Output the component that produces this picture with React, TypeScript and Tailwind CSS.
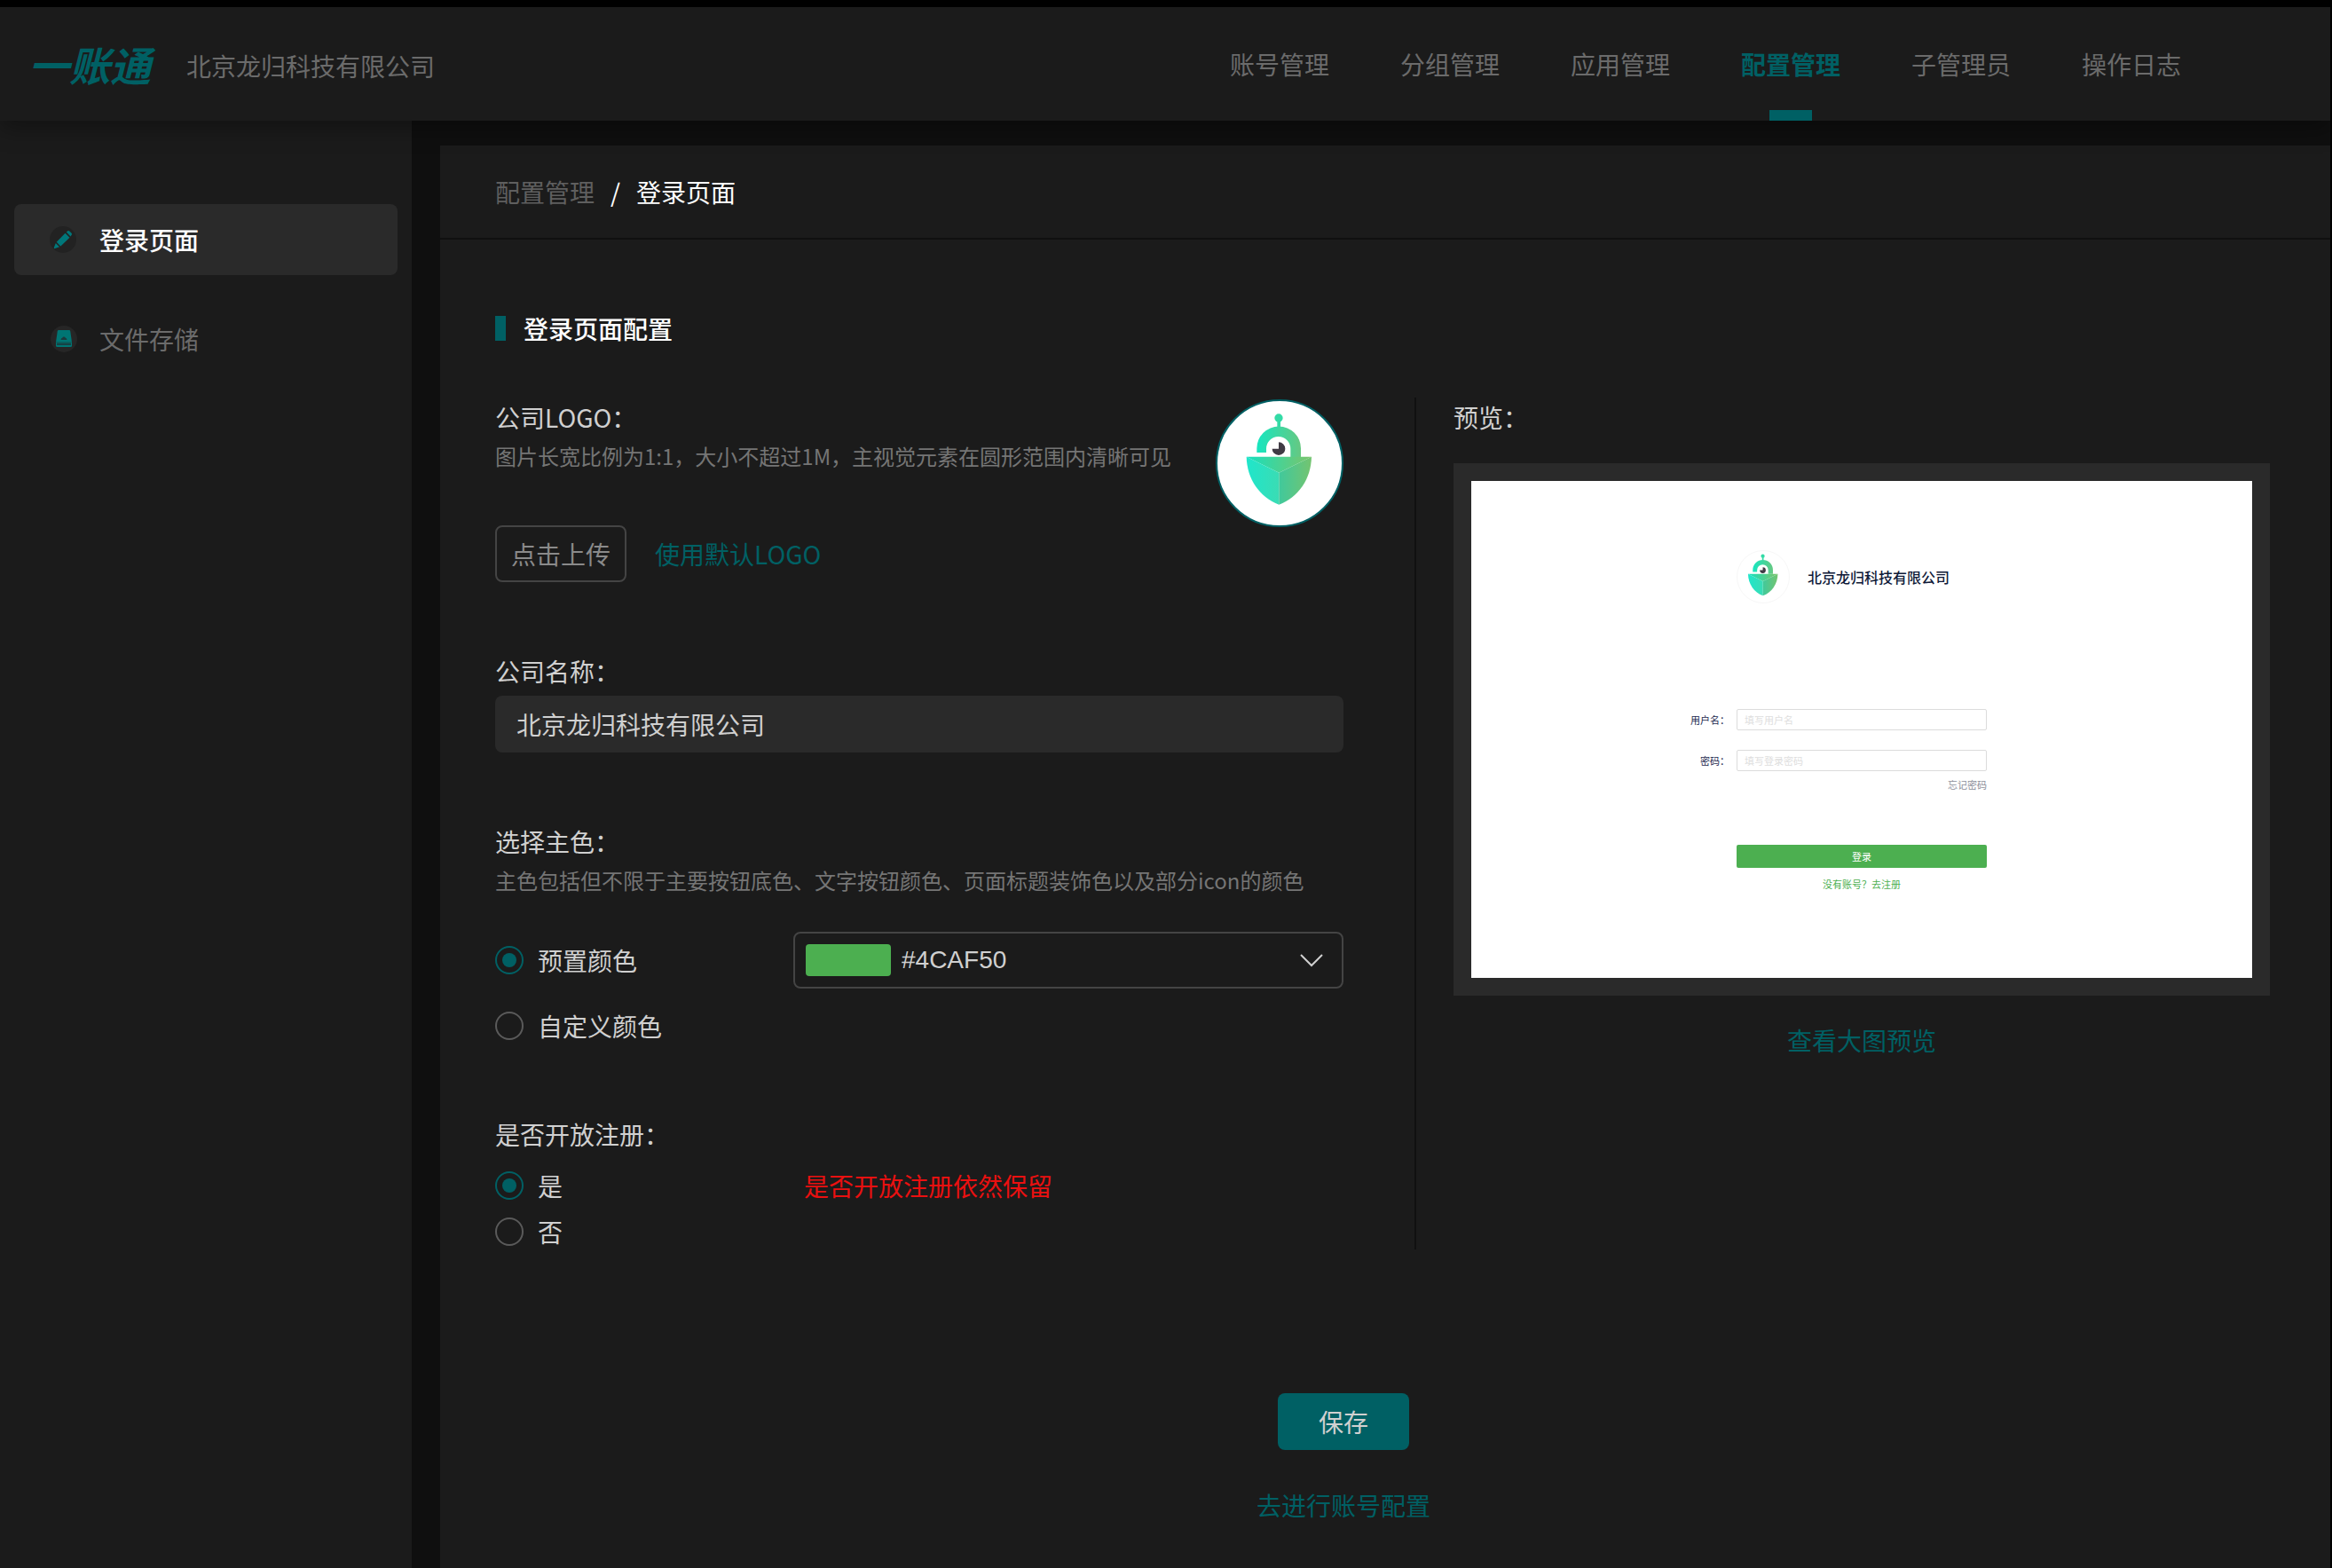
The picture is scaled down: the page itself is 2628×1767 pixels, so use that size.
import { useId, useState } from 'react'
import type { ReactNode } from 'react'
import clsx from 'clsx'

const NAV_ITEMS = ['账号管理', '分组管理', '应用管理', '配置管理', '子管理员', '操作日志']
const COMPANY = '北京龙归科技有限公司'
const PRESET_COLORS = ['#4CAF50', '#2196F3', '#FF9800', '#006064']

function RobotLogo({ className }: { className?: string }) {
  const id = useId()
  return (
    <svg viewBox="96 96 420 420" className={className} aria-hidden="true">
      <defs>
        <linearGradient id={`${id}arch`} x1="229" y1="0" x2="378" y2="0" gradientUnits="userSpaceOnUse">
          <stop offset="0" stopColor="#16e6c0" />
          <stop offset="1" stopColor="#66c882" />
        </linearGradient>
        <linearGradient id={`${id}top`} x1="194" y1="0" x2="414" y2="0" gradientUnits="userSpaceOnUse">
          <stop offset="0" stopColor="#16e0be" />
          <stop offset="1" stopColor="#7cc46a" />
        </linearGradient>
        <linearGradient id={`${id}left`} x1="194" y1="0" x2="304" y2="0" gradientUnits="userSpaceOnUse">
          <stop offset="0" stopColor="#1fe6cb" />
          <stop offset="1" stopColor="#3adcb4" />
        </linearGradient>
        <linearGradient id={`${id}right`} x1="304" y1="0" x2="414" y2="0" gradientUnits="userSpaceOnUse">
          <stop offset="0" stopColor="#40c99c" />
          <stop offset="1" stopColor="#74c470" />
        </linearGradient>
      </defs>
      <circle cx="303" cy="153" r="14" fill="#33dba6" />
      <path d="M298 160h11v26h-11z" fill="#33dba6" />
      <path
        d="M229 270v-14a74 74 0 0 1 149 0v29h-35v-28a41 41 0 0 0-82 0v13z"
        fill={`url(#${id}arch)`}
      />
      <path d="M303 235a22 22 0 1 1-22 22h22z" fill="#403a44" />
      <path d="M194 284h220l-110 54z" fill={`url(#${id}top)`} />
      <path d="M194 284l110 54v108c-66-26-108-86-110-162z" fill={`url(#${id}left)`} />
      <path d="M414 284l-110 54v108c66-26 108-86 110-162z" fill={`url(#${id}right)`} />
    </svg>
  )
}

function PencilIcon() {
  return (
    <svg viewBox="0 0 32 32" className="size-8" aria-hidden="true">
      <circle cx="15" cy="16" r="15" fill="#222222" />
      <g fill="#00777a">
        <path d="M17.500 8.800l5 5-10.200 9.600-4.600-4.600z" />
        <path d="M18.800 7.600l1.500-1.300q1-.8 2 .1l2.300 2.300q.9 1 .1 2l-1.200 1.700z" />
        <path d="M6.800 20l4.200 4.200-5.200 1.900q-1.200.2-1-1z" />
      </g>
    </svg>
  )
}

function StorageIcon() {
  return (
    <svg viewBox="0 0 32 32" className="size-8" aria-hidden="true">
      <circle cx="16" cy="16" r="15" fill="#262626" />
      <path d="M10 6h12q1 0 1.200 1L25 19.500H7L8.800 7Q9 6 10 6z" fill="#007573" />
      <path d="M12.500 17q0-2 2-2.500 0-1 1.500-1t1.500 1q2 .5 2 2.500z" fill="#1c3a3c" />
      <path d="M7 19.500h18v4q0 1.500-1.500 1.500h-15Q7 25 7 23.500z" fill="#007573" />
      <path d="M8 20.500h16v2.500H8z" fill="#164244" />
    </svg>
  )
}

interface RadioProps {
  name: string
  label: string
  checked: boolean
  onChange: () => void
}

function Radio({ name, label, checked, onChange }: RadioProps) {
  return (
    <label className="flex h-10 items-center gap-4">
      <input
        type="radio"
        name={name}
        checked={checked}
        onChange={onChange}
        className="grid size-8 appearance-none place-content-center rounded-full border-2 border-[#5a5a5a] checked:border-[#006064] checked:before:size-4 checked:before:rounded-full checked:before:bg-[#006064] checked:before:content-['']"
      />
      {label}
    </label>
  )
}

function Header() {
  return (
    <header className="relative z-10 flex h-32 items-center justify-between bg-[#1b1b1b] pr-[168px] pl-8 shadow-[0_8px_24px_rgba(0,0,0,0.35)]">
      <div className="flex items-center gap-10">
        <a href="#" className="text-[46px] leading-none font-bold whitespace-nowrap text-[#006064] italic">一账通</a>
        <span className="pt-1 text-[28px] leading-10 whitespace-nowrap text-[#6b6b6b]">{COMPANY}</span>
      </div>
      <nav className="flex h-full gap-20">
        {NAV_ITEMS.map((item) => {
          const active = item === '配置管理'
          return (
            <a
              key={item}
              href="#"
              className={clsx(
                'flex h-full flex-col items-center justify-between pt-11 text-[28px] leading-10 whitespace-nowrap',
                active ? 'font-bold text-[#006064]' : 'text-[#6b6b6b]',
              )}
            >
              {item}
              {active && <span className="h-3 w-12 bg-[#006064]" />}
            </a>
          )
        })}
      </nav>
    </header>
  )
}

function SideItem({ icon, label, active }: { icon: ReactNode; label: string; active?: boolean }) {
  return (
    <a
      href="#"
      className={clsx(
        'flex h-20 items-center gap-6 rounded-lg pl-10 text-[28px] leading-10',
        active ? 'bg-[#2a2a2a] font-medium text-white' : 'text-[#6b6b6b]',
      )}
    >
      {icon}
      {label}
    </a>
  )
}

function LoginPreview({ color }: { color: string }) {
  return (
    <div className="bg-[#2a2a2a] p-5">
      <form
        className="grid grid-cols-[1fr_282px_1fr] gap-x-2 bg-white pt-[78px] pb-[98px] text-[11px] leading-4 text-[#1c2950]"
        onSubmit={(e) => e.preventDefault()}
      >
        <div className="col-start-2 flex items-center gap-5">
          <div className="grid size-[60px] place-content-center rounded-full border border-[#f7f7f7]">
            <RobotLogo className="size-16" />
          </div>
          <span className="text-base font-medium whitespace-nowrap text-[#0f1a38]">{COMPANY}</span>
        </div>

        <label htmlFor="preview-user" className="col-start-1 mt-[119px] flex h-6 items-center justify-end">用户名：</label>
        <input
          id="preview-user"
          placeholder="填写用户名"
          className="mt-[119px] h-6 rounded-xs border border-[#dcdcdc] px-2 placeholder:text-[#dedede]"
        />

        <label htmlFor="preview-password" className="col-start-1 mt-[22px] flex h-6 items-center justify-end">密码：</label>
        <input
          id="preview-password"
          type="password"
          placeholder="填写登录密码"
          className="mt-[22px] h-6 rounded-xs border border-[#dcdcdc] px-2 placeholder:text-[#dedede]"
        />

        <a href="#" className="col-start-2 mt-[7px] justify-self-end text-[#8d909b]">忘记密码</a>
        <button
          type="submit"
          className="col-start-2 mt-[60px] h-[26px] rounded-xs text-white"
          style={{ backgroundColor: color }}
        >
          登录
        </button>
        <a href="#" className="col-start-2 mt-[10px] justify-self-center" style={{ color }}>没有账号？去注册</a>
      </form>
    </div>
  )
}

export default function App() {
  const [company, setCompany] = useState(COMPANY)
  const [colorMode, setColorMode] = useState('preset')
  const [color, setColor] = useState(PRESET_COLORS[0])
  const [openRegister, setOpenRegister] = useState(true)

  return (
    <div className="flex min-h-screen flex-col border-t-8 border-r-2 border-black bg-[#0f0f0f] font-['Noto_Sans_CJK_SC','Liberation_Sans',sans-serif] text-[28px] leading-10 text-[#d0d0d0]">
      <Header />

      <div className="flex flex-1 gap-8">
        <aside className="flex w-[464px] shrink-0 flex-col gap-8 bg-[#1b1b1b] px-4 pt-[94px]">
          <SideItem icon={<PencilIcon />} label="登录页面" active />
          <SideItem icon={<StorageIcon />} label="文件存储" />
        </aside>

        <main className="mt-7 flex-1 bg-[#1b1b1b]">
          <nav className="flex h-[106px] items-center gap-[18px] border-b-2 border-[#101010] pl-[62px]">
            <a href="#" className="text-[#5f5f5f]">配置管理</a>
            <span className="text-white">/</span>
            <span className="text-white">登录页面</span>
          </nav>

          <div className="pt-20 pr-[68px] pl-[62px]">
            <h1 className="flex items-center gap-5 font-medium text-white">
              <span className="h-7 w-3 bg-[#006064]" />
              登录页面配置
            </h1>

            <div className="mt-[58px] flex">
              <div className="flex-[239] pt-0.5">
                <section className="flex items-start justify-between">
                  <div>
                    <h2>公司LOGO：</h2>
                    <p className="mt-2 text-2xl leading-8 text-[#757575]">图片长宽比例为1:1，大小不超过1M，主视觉元素在圆形范围内清晰可见</p>
                    <div className="mt-[62px] flex items-center gap-8">
                      <button type="button" className="h-16 w-[148px] rounded-lg border-2 border-[#444444] text-[#8a8a8a]">点击上传</button>
                      <button type="button" className="text-[#006064]">使用默认LOGO</button>
                    </div>
                  </div>
                  <div className="size-36 shrink-0 overflow-hidden rounded-full border-2 border-[#006064] bg-white">
                    <RobotLogo className="size-full" />
                  </div>
                </section>

                <section className="mt-20">
                  <label htmlFor="company" className="block">公司名称：</label>
                  <input
                    id="company"
                    value={company}
                    onChange={(e) => setCompany(e.target.value)}
                    className="mt-2 block h-16 w-full rounded-lg bg-[#2a2a2a] px-6"
                  />
                </section>

                <section className="mt-20">
                  <h2>选择主色：</h2>
                  <p className="mt-2 text-2xl leading-8 text-[#757575]">主色包括但不限于主要按钮底色、文字按钮颜色、页面标题装饰色以及部分icon的颜色</p>
                  <div className="mt-[42px] grid grid-cols-[336px_1fr] items-center">
                    <Radio
                      name="color-mode"
                      label="预置颜色"
                      checked={colorMode === 'preset'}
                      onChange={() => setColorMode('preset')}
                    />
                    <div className="flex h-16 items-center rounded-lg border-2 border-[#444444] pr-5 pl-3">
                      <span className="h-9 w-24 rounded-sm" style={{ backgroundColor: color }} />
                      <select
                        aria-label="预置颜色"
                        value={color}
                        onChange={(e) => setColor(e.target.value)}
                        className="flex-1 appearance-none bg-transparent pl-3 font-['Liberation_Sans',sans-serif]"
                      >
                        {PRESET_COLORS.map((c) => (
                          <option key={c}>{c}</option>
                        ))}
                      </select>
                      <svg viewBox="0 0 28 16" className="h-4 w-7" fill="none" stroke="#d0d0d0" strokeWidth="2" aria-hidden="true">
                        <path d="M2 2l12 12L26 2" />
                      </svg>
                    </div>
                  </div>
                  <div className="mt-[22px]">
                    <Radio
                      name="color-mode"
                      label="自定义颜色"
                      checked={colorMode === 'custom'}
                      onChange={() => setColorMode('custom')}
                    />
                  </div>
                </section>

                <section className="mt-[82px]">
                  <h2>是否开放注册：</h2>
                  <div className="mt-[18px] grid grid-cols-[336px_1fr] gap-y-3">
                    <Radio name="register" label="是" checked={openRegister} onChange={() => setOpenRegister(true)} />
                    <p className="pl-3 text-[#ea1010]">是否开放注册依然保留</p>
                    <Radio name="register" label="否" checked={!openRegister} onChange={() => setOpenRegister(false)} />
                  </div>
                </section>
              </div>

              <div className="mr-[42px] ml-20 w-0.5 bg-[#101010]" />

              <section className="flex flex-[230] flex-col pt-0.5">
                <h2>预览：</h2>
                <div className="mt-8">
                  <LoginPreview color={color} />
                </div>
                <a href="#" className="mt-[30px] self-center text-[#006064]">查看大图预览</a>
              </section>
            </div>

            <div className="mt-[162px] flex flex-col items-center gap-[42px] pr-[88px] pb-12">
              <button type="button" className="h-16 w-[148px] rounded-lg bg-[#006064]">保存</button>
              <a href="#" className="text-[#006064]">去进行账号配置</a>
            </div>
          </div>
        </main>
      </div>
    </div>
  )
}
